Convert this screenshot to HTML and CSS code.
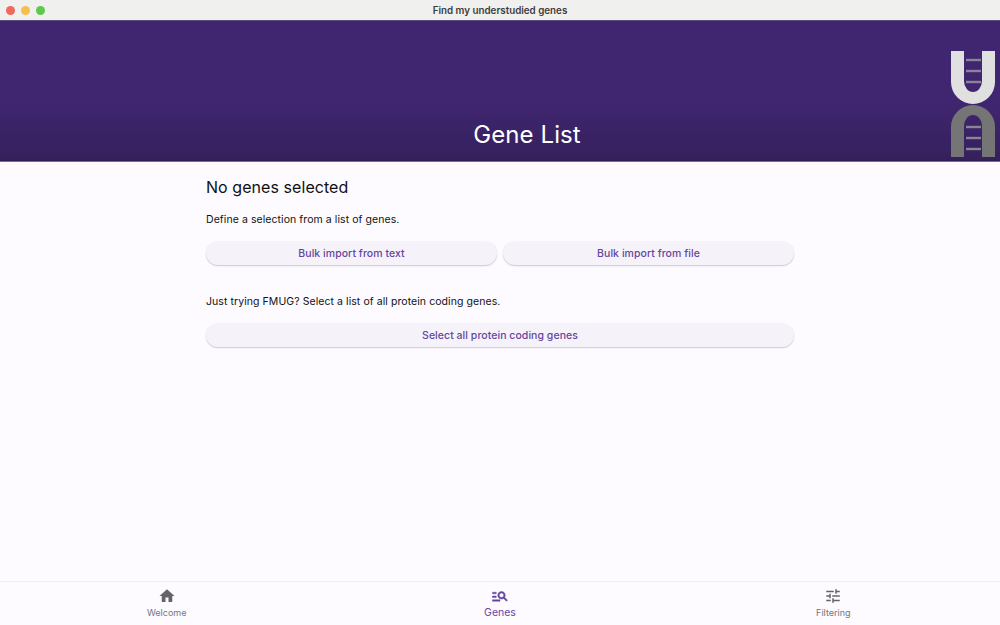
FILE: index.html
```html
<!DOCTYPE html>
<html lang="en">
<head>
    <meta charset="UTF-8">
    <title>Find my understudied genes</title>
    <link rel="stylesheet" href="styles.css">
</head>
<body>
    <div class="titlebar">
        <div class="traffic">
            <span class="light red"></span>
            <span class="light yellow"></span>
            <span class="light green"></span>
        </div>
        <div class="window-title">Find my understudied genes</div>
    </div>

    <header class="header">
        <h1 class="page-title">Gene List</h1>
        <svg class="logo" width="44" height="106" viewBox="0 0 44 106">
            <!-- top strand -->
            <path d="M0 0H13V30A9 11 0 0 0 31 30V0H44V31A22 22 0 0 1 0 31Z" fill="#e0e0e0"/>
            <g fill="#8a8494">
                <rect x="15" y="7.800" width="15" height="2.400"/>
                <rect x="15" y="18.800" width="15" height="2.400"/>
                <rect x="15" y="29.800" width="15" height="2.400"/>
            </g>
            <!-- bottom strand -->
            <path d="M0 106H13V75A9 11 0 0 1 31 75V106H44V76A22 22 0 0 0 0 76Z" fill="#757575"/>
            <g fill="#8a8494">
                <rect x="15" y="74.800" width="15" height="2.400"/>
                <rect x="15" y="85.800" width="15" height="2.400"/>
                <rect x="15" y="96.800" width="15" height="2.400"/>
            </g>
        </svg>
    </header>

    <main class="content">
        <h2 class="section-title">No genes selected</h2>
        <p class="text">Define a selection from a list of genes.</p>
        <div class="button-row">
            <button class="pill">Bulk import from text</button>
            <button class="pill">Bulk import from file</button>
        </div>
        <p class="text text-second">Just trying FMUG? Select a list of all protein coding genes.</p>
        <div class="button-row">
            <button class="pill">Select all protein coding genes</button>
        </div>
    </main>

    <nav class="bottom-nav">
        <div class="nav-item">
            <svg class="nav-icon" viewBox="0 0 24 24"><path d="M10 20v-6h4v6h5v-8h3L12 3 2 12h3v8z"/></svg>
            <span>Welcome</span>
        </div>
        <div class="nav-item active">
            <svg class="nav-icon" viewBox="0 0 24 24"><path d="M7 9H2V7h5v2zm0 3H2v2h5v-2zm13.590 7-3.830-3.830c-.8.520-1.740.830-2.760.830-2.760 0-5-2.240-5-5s2.240-5 5-5 5 2.240 5 5c0 1.020-.310 1.960-.830 2.750L22 17.590 20.590 19zM17 11c0-1.650-1.350-3-3-3s-3 1.350-3 3 1.350 3 3 3 3-1.350 3-3zM2 19h10v-2H2v2z"/></svg>
            <span>Genes</span>
        </div>
        <div class="nav-item">
            <svg class="nav-icon" viewBox="0 0 24 24"><path d="M3 17v2h6v-2H3zM3 5v2h10V5H3zm10 16v-2h8v-2h-8v-2h-2v6h2zM7 9v2H3v2h4v2h2V9H7zm14 4v-2H11v2h10zm-6-4h2V7h4V5h-4V3h-2v6z"/></svg>
            <span>Filtering</span>
        </div>
    </nav>
</body>
</html>
```

FILE: styles.css
```css
* {
    box-sizing: border-box;
}

html, body {
    height: 100%;
}

body {
    margin: 0;
    display: flex;
    flex-direction: column;
    background: #fdfbff;
    color: #1c1b1f;
    font-family: Inter, "Liberation Sans", sans-serif;
    overflow: hidden;
}

.titlebar {
    height: 21px;
    flex: none;
    display: flex;
    align-items: center;
    position: relative;
    background: #f0f0ee;
    border-bottom: 1px solid #5b4a7c;
}

.traffic {
    position: absolute;
    left: 6px;
    top: 6px;
    display: flex;
    gap: 6px;
}

.light {
    width: 9px;
    height: 9px;
    border-radius: 50%;
}

.red { background: #f0685e; }
.yellow { background: #f6bd4f; }
.green { background: #5ec84f; }

.window-title {
    flex: 1;
    text-align: center;
    font-size: 9.8px;
    font-weight: 600;
    color: #3c3c3c;
}

.header {
    height: 141px;
    flex: none;
    position: relative;
    display: flex;
    align-items: flex-end;
    justify-content: center;
    padding: 0 0 11px 54px;
    background: linear-gradient(#402671 0, #402671 55%, #35205c 100%);
    border-bottom: 1px solid #7a6b96;
    box-shadow: inset 0 -1px 0 #2f1c54;
}

.page-title {
    margin: 0;
    font-size: 24px;
    font-weight: 400;
    line-height: 30px;
    letter-spacing: 0.1px;
    color: #fff;
}

.logo {
    position: absolute;
    left: 951px;
    top: 30px;
}

.content {
    flex: 1;
    width: 588px;
    margin: 0 auto;
    padding-top: 14px;
}

.section-title {
    margin: 0;
    font-size: 16px;
    font-weight: 400;
    line-height: 22px;
    letter-spacing: 0.06px;
    color: #111;
}

.text {
    margin: 14px 0 0;
    font-size: 10.5px;
    line-height: 16px;
    letter-spacing: 0.07px;
    color: #111;
}

.text-second {
    margin-top: 29px;
}

.button-row {
    display: flex;
    gap: 6px;
    margin-top: 13px;
}

.pill {
    flex: 1;
    height: 24px;
    border: none;
    border-radius: 12px;
    background: #f5f3f9;
    box-shadow: 0 1px 1.500px rgba(0, 0, 0, 0.2);
    color: #65459f;
    font-family: inherit;
    font-size: 10.5px;
    font-weight: 500;
    letter-spacing: 0.05px;
}

.bottom-nav {
    height: 44px;
    flex: none;
    display: grid;
    grid-template-columns: repeat(3, 1fr);
    border-top: 1px solid #f1eff4;
    background: #fdfbff;
}

.nav-item {
    display: flex;
    flex-direction: column;
    align-items: center;
    padding-top: 5px;
    font-size: 9px;
    color: #77757b;
}

.nav-icon {
    width: 18px;
    height: 18px;
    fill: #65636a;
    margin-bottom: 2px;
}

.nav-item.active {
    color: #65459f;
    font-size: 10.5px;
}

.nav-item.active .nav-icon {
    fill: #65459f;
    stroke: #65459f;
    stroke-width: 0.6;
    margin-bottom: 1px;
}
```
